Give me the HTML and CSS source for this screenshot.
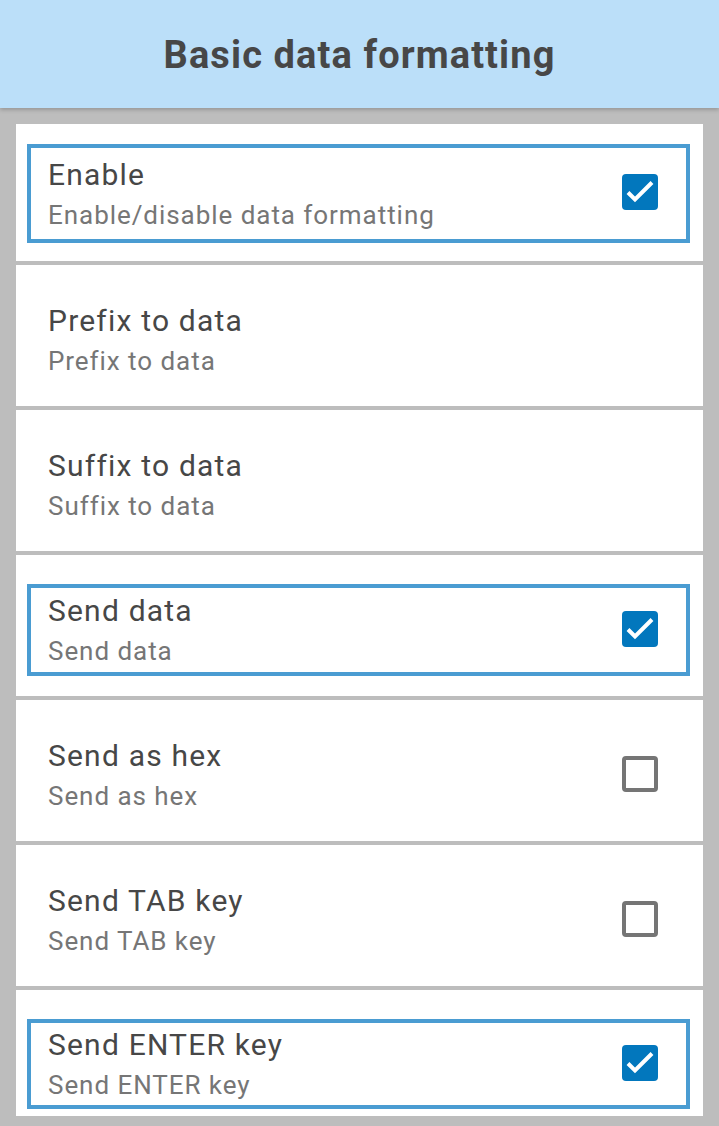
FILE: index.html
```html
<!DOCTYPE html>
<html lang="en">
<head>
    <meta charset="UTF-8">
    <meta name="viewport" content="width=device-width, initial-scale=1.0">
    <title>Basic data formatting</title>
    <link rel="stylesheet" href="styles.css">
</head>
<body>
    <header class="app-bar">
        <h1>Basic data formatting</h1>
    </header>

    <div class="pref-list">
        <div class="pref-card first">
            <div class="pref-row focused">
                <div class="pref-text">
                    <div class="pref-title">Enable</div>
                    <div class="pref-summary">Enable/disable data formatting</div>
                </div>
                <span class="checkbox checked">
                    <svg viewBox="0 0 36 36"><path d="M6 18.5 L13 25.5 L30 8.5"/></svg>
                </span>
            </div>
        </div>

        <div class="pref-card">
            <div class="pref-row">
                <div class="pref-text">
                    <div class="pref-title">Prefix to data</div>
                    <div class="pref-summary">Prefix to data</div>
                </div>
            </div>
        </div>

        <div class="pref-card">
            <div class="pref-row">
                <div class="pref-text">
                    <div class="pref-title">Suffix to data</div>
                    <div class="pref-summary">Suffix to data</div>
                </div>
            </div>
        </div>

        <div class="pref-card">
            <div class="pref-row focused">
                <div class="pref-text">
                    <div class="pref-title">Send data</div>
                    <div class="pref-summary">Send data</div>
                </div>
                <span class="checkbox checked">
                    <svg viewBox="0 0 36 36"><path d="M6 18.5 L13 25.5 L30 8.5"/></svg>
                </span>
            </div>
        </div>

        <div class="pref-card">
            <div class="pref-row">
                <div class="pref-text">
                    <div class="pref-title">Send as hex</div>
                    <div class="pref-summary">Send as hex</div>
                </div>
                <span class="checkbox"></span>
            </div>
        </div>

        <div class="pref-card">
            <div class="pref-row">
                <div class="pref-text">
                    <div class="pref-title">Send TAB key</div>
                    <div class="pref-summary">Send TAB key</div>
                </div>
                <span class="checkbox"></span>
            </div>
        </div>

        <div class="pref-card last">
            <div class="pref-row focused">
                <div class="pref-text">
                    <div class="pref-title">Send ENTER key</div>
                    <div class="pref-summary">Send ENTER key</div>
                </div>
                <span class="checkbox checked">
                    <svg viewBox="0 0 36 36"><path d="M6 18.5 L13 25.5 L30 8.5"/></svg>
                </span>
            </div>
        </div>
    </div>
</body>
</html>
```

FILE: styles.css
```css
body {
    margin: 0;
    padding: 0;
    background-color: #bdbdbd;
    font-family: Roboto, "Liberation Sans", sans-serif;
    height: 1126px;
    overflow: hidden;
}
.app-bar {
    position: relative;
    z-index: 1;
    height: 108px;
    background-color: #bbdff9;
    box-shadow: 0px 2px 4px rgba(0, 0, 0, 0.2); /* toolbar elevation */
    display: flex;
    align-items: center;
    justify-content: center;
}
.app-bar h1 {
    margin: 0;
    padding-top: 2px;
    font-size: 38px;
    font-weight: 700;
    letter-spacing: 1.1px;
    color: #474747;
}
.pref-list {
    display: flex;
    flex-direction: column;
    gap: 4px;
    padding: 16px 16px 0 16px;
}
.pref-card {
    background-color: white;
    height: 141px;
    padding: 0 13px 0 11px;
    box-sizing: border-box;
    display: flex;
    flex-direction: column;
}
.pref-card.first {
    height: 137px;
}
.pref-card.last {
    height: 126px; /* list is cut off at the bottom */
}
.pref-row {
    height: 92px;
    margin-top: 29px;
    border: 4px solid transparent;
    box-sizing: border-box;
    display: flex;
    align-items: center;
    padding: 0 28px 0 17px;
}
.pref-row.focused {
    border-color: #4a9cd2;
}
.first .pref-row {
    margin-top: 20px;
    height: 99px;
}
.last .pref-row {
    height: 90px;
}
.pref-text {
    flex: 1;
    margin-top: 2px;
}
.pref-title {
    font-size: 30px;
    line-height: 40px;
    letter-spacing: 1.2px;
    color: #474747;
}
.pref-summary {
    font-size: 26px;
    line-height: 40px;
    letter-spacing: 0.95px;
    color: #767676;
}
.checkbox {
    width: 36px;
    height: 36px;
    box-sizing: border-box;
    border: 4px solid #757575;
    border-radius: 4px;
    margin-top: -3px;
}
.checkbox.checked {
    border: none;
    background-color: #0277bd;
}
.checkbox svg {
    display: block;
    width: 36px;
    height: 36px;
    fill: none;
    stroke: white;
    stroke-width: 4;
}
```
